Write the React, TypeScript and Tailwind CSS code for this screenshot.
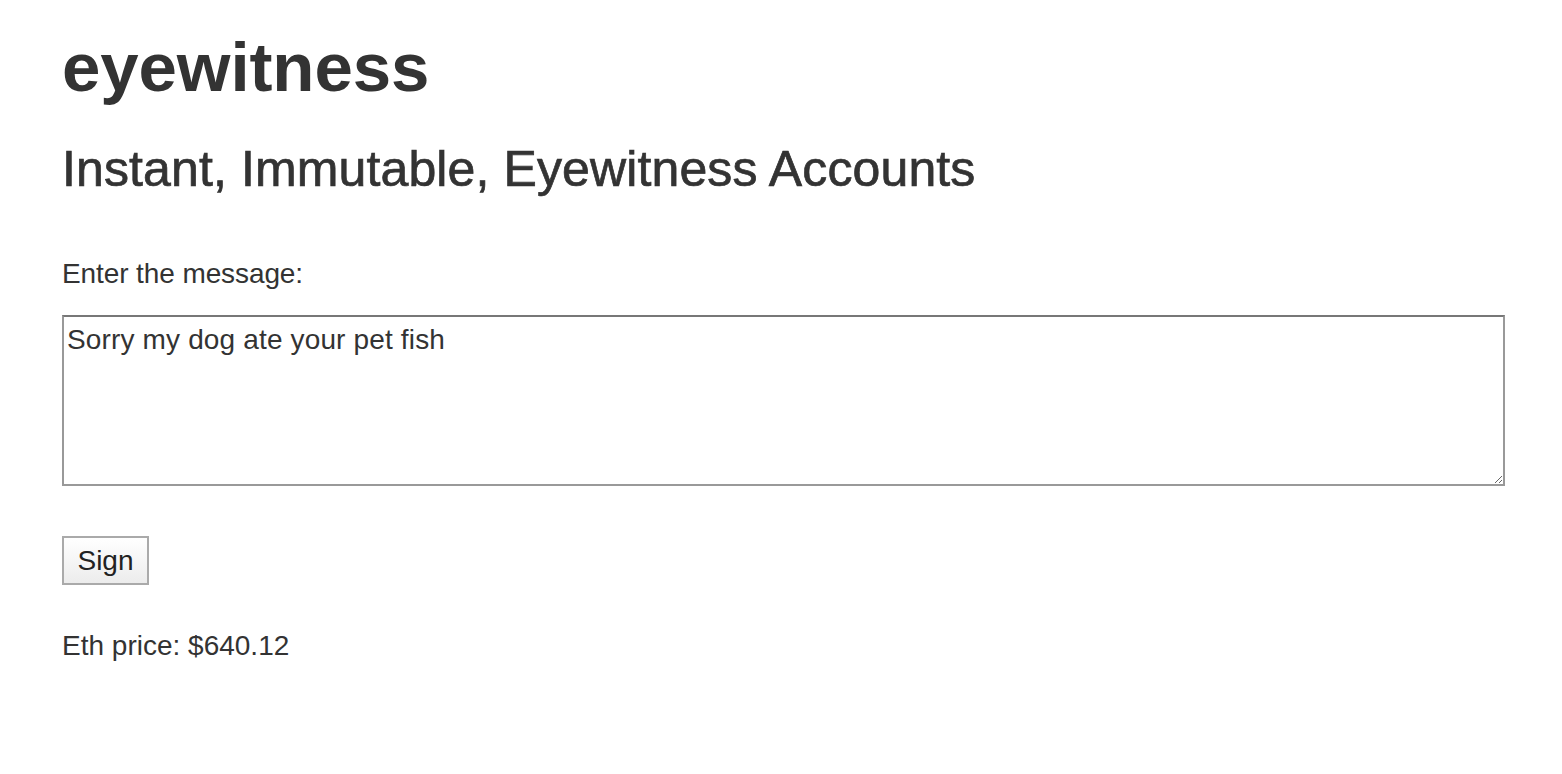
import { useState } from "react";

// Single-page signer form: title, tagline, message box, sign button and the price line.
export default function App() {
  const [message, setMessage] = useState("Sorry my dog ate your pet fish");
  const ethPrice = 640.12;

  return (
    <div className="min-h-screen bg-white text-[#333]" style={{ fontFamily: '"Liberation Sans", Arial, Helvetica, sans-serif' }}>
      <div className="pl-[62px] pr-[57px]">
        <h1 className="mt-[30px] text-[69px] font-bold leading-[76px] tracking-[-0.1px]">eyewitness</h1>
        <h2 className="mt-[36px] text-[50px] leading-[55px] tracking-[0.12px] [-webkit-text-stroke:0.7px_#333]">Instant, Immutable, Eyewitness Accounts</h2>

        <form className="mt-[57px]" onSubmit={(e) => e.preventDefault()}>
          <label htmlFor="msg" className="block text-[28px] leading-[40px] tracking-[-0.1px]">Enter the message:</label>
          <textarea
            id="msg"
            value={message}
            onChange={(e) => setMessage(e.target.value)}
            className="mt-[21px] block h-[171px] w-full border-2 border-[#999] border-t-[#777] bg-white p-[3px] text-[28px] leading-[40px] tracking-[0.15px] text-[#333] outline-none"
          />
          <button
            type="submit"
            className="mt-[50px] block h-[49px] w-[87px] border-2 border-[#aaa] bg-gradient-to-b from-white to-[#ececec] text-[28px] leading-[40px] text-[#222]"
          >
            Sign
          </button>
        </form>

        <p className="mt-[40px] text-[28px] leading-[41px]">Eth price: ${ethPrice.toFixed(2)}</p>
      </div>
    </div>
  );
}
